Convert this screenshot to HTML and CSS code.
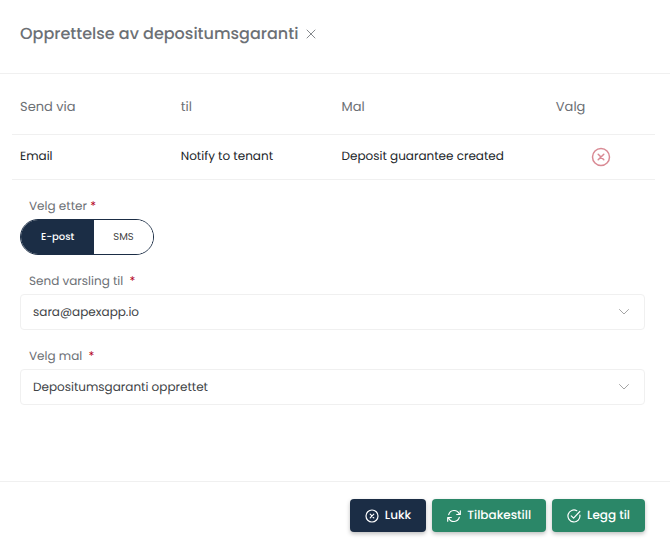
FILE: index.html
```html
<!DOCTYPE html>
<html lang="no">
<head>
<meta charset="utf-8">
<meta name="viewport" content="width=device-width, initial-scale=1">
<title>Opprettelse av depositumsgaranti</title>
<link rel="stylesheet" href="styles.css">
</head>
<body>
<main class="dialog">
  <header class="dialog-header">
    <h1 class="title">Opprettelse av depositumsgaranti</h1>
    <button class="icon-button" type="button" aria-label="Lukk dialog">
      <svg class="icon-close" viewBox="0 0 10 10" aria-hidden="true"><path d="M1 1l8 8M9 1L1 9"/></svg>
    </button>
  </header>

  <section class="dialog-body">
    <table class="rules">
      <thead>
        <tr><th>Send via</th><th>til</th><th class="col-template">Mal</th><th class="col-action">Valg</th></tr>
      </thead>
      <tbody>
        <tr>
          <td>Email</td>
          <td>Notify to tenant</td>
          <td>Deposit guarantee created</td>
          <td class="action">
            <button class="icon-button" type="button" aria-label="Fjern">
              <svg class="icon-remove" viewBox="0 0 20 20" aria-hidden="true"><circle cx="10" cy="10" r="8.5"/><path d="M7.2 7.2l5.6 5.6M12.8 7.2l-5.6 5.6"/></svg>
            </button>
          </td>
        </tr>
      </tbody>
    </table>

    <form class="form">
      <fieldset class="field">
        <legend class="label">Velg etter <span class="required">*</span></legend>
        <div class="toggle">
          <button class="toggle-option active" type="button" aria-pressed="true">E-post</button>
          <button class="toggle-option" type="button" aria-pressed="false">SMS</button>
        </div>
      </fieldset>
      <div class="field">
        <label class="label" for="recipient">Send varsling til <span class="required spaced">*</span></label>
        <div class="select">
          <select id="recipient"><option>sara@apexapp.io</option></select>
          <svg class="icon-chevron" viewBox="0 0 10 6" aria-hidden="true"><path d="M.5.5L5 5l4.500-4.500"/></svg>
        </div>
      </div>
      <div class="field">
        <label class="label" for="template">Velg mal <span class="required spaced">*</span></label>
        <div class="select">
          <select id="template"><option>Depositumsgaranti opprettet</option></select>
          <svg class="icon-chevron" viewBox="0 0 10 6" aria-hidden="true"><path d="M.5.5L5 5l4.500-4.500"/></svg>
        </div>
      </div>
    </form>
  </section>

  <footer class="dialog-footer">
    <button class="button dark" type="button">
      <svg class="icon" viewBox="0 0 14 14" aria-hidden="true"><circle cx="7" cy="7" r="6"/><path d="M5.200 5.200l3.600 3.600M8.800 5.200L5.200 8.800"/></svg>
      Lukk
    </button>
    <button class="button" type="button">
      <svg class="icon" viewBox="0 0 14 14" aria-hidden="true"><path d="M1.700 5.600a5.600 5.600 0 0 1 10.500-.8M13.300 1.800v3.700H9.700M12.300 8.400a5.600 5.600 0 0 1-10.500.8M.7 12.200V8.500h3.600"/></svg>
      Tilbakestill
    </button>
    <button class="button" type="button">
      <svg class="icon" viewBox="0 0 14 14" aria-hidden="true"><path d="M12.900 6.200A6 6 0 1 1 9.800 1.700M4.200 6.800l2.400 2.400 6.200-6.700"/></svg>
      Legg til
    </button>
  </footer>
</main>
</body>
</html>
```
FILE: styles.css
```css
* {
  box-sizing: border-box;
}

body {
  margin: 0;
  background: #fff;
  color: #212529;
  font: 12px/20px Poppins, Inter, sans-serif;
  text-rendering: geometricPrecision;
}

button,
select {
  font: inherit;
  text-rendering: inherit;
}

svg {
  display: block;
  fill: none;
  stroke: currentColor;
  stroke-linecap: round;
  stroke-linejoin: round;
}

.dialog {
  display: flex;
  flex-direction: column;
  min-height: 100vh;
}

.dialog-header {
  display: flex;
  align-items: center;
  gap: 8px;
  padding: 22px 20px 27px;
  border-bottom: 1px solid #f0f0f0;
}

.title {
  margin: 0;
  color: #6c7075;
  font-size: 16px;
  font-weight: 500;
  line-height: 24px;
}

.icon-button {
  padding: 0;
  border: 0;
  background: none;
  color: #85898d;
}

.icon-close {
  width: 10px;
  height: 10px;
}

.dialog-body {
  flex: 1;
}

.rules {
  width: calc(100% - 27px);
  margin: 0 15px 0 12px;
  border-collapse: collapse;
  table-layout: fixed;
}

.rules th,
.rules td {
  padding: 0 8px;
  border-bottom: 1px solid #f0f0f0;
  text-align: left;
}

.rules th {
  height: 60px;
  padding-top: 7px;
  color: #6c7075;
  font-size: 13px;
  font-weight: 400;
}

.rules td {
  height: 45px;
}

.rules .col-template {
  width: 33.33%;
}

.rules .col-action {
  width: 16.67%;
}

.rules .action .icon-button {
  display: block;
  margin: 0 auto;
  color: #d98a94;
}

.icon-remove {
  width: 20px;
  height: 20px;
  stroke-width: 1.5;
}

.form {
  display: flex;
  flex-direction: column;
  gap: 17px;
  padding: 17px 25px 0 20px;
}

.field {
  min-width: 0;
  margin: 0;
  padding: 0;
  border: 0;
}

.label {
  display: block;
  padding: 0 0 2px 9px;
  color: #6c7075;
}

.required {
  color: #b3001b;
}

.spaced {
  margin-left: 3px;
}

.toggle {
  display: inline-flex;
  height: 36px;
  overflow: hidden;
  border: 1px solid #1b2d45;
  border-radius: 18px;
  vertical-align: top;
}

.toggle-option {
  padding: 0 19px;
  border: 0;
  background: #fff;
  color: #444;
  font-size: 10px;
}

.toggle-option.active {
  padding: 0 20px;
  background: #1b2d45;
  color: #fff;
  font-weight: 500;
}

.select {
  display: grid;
  align-items: center;
}

.select select,
.icon-chevron {
  grid-area: 1 / 1;
}

.select select {
  width: 100%;
  height: 36px;
  padding: 2px 40px 0 12px;
  border: 1px solid #f0f0f0;
  border-radius: 4px;
  appearance: none;
  background: #fff;
  color: #404346;
}

.icon-chevron {
  justify-self: end;
  width: 10px;
  height: 6px;
  margin-right: 16px;
  color: #a5a5a5;
  pointer-events: none;
}

.dialog-footer {
  display: flex;
  justify-content: flex-end;
  gap: 6px;
  padding: 17px 25px 13px 20px;
  border-top: 1px solid #f0f0f0;
}

.button {
  display: flex;
  align-items: center;
  gap: 6px;
  height: 33px;
  padding: 0 15px;
  border: 0;
  border-radius: 4px;
  background: #2b8768;
  box-shadow: 0 2px 4px rgba(0, 0, 0, 0.25);
  color: #fff;
  font-weight: 500;
}

.button.dark {
  background: #1b2d45;
}

.icon {
  width: 14px;
  height: 14px;
  stroke-width: 1.2;
}
```
